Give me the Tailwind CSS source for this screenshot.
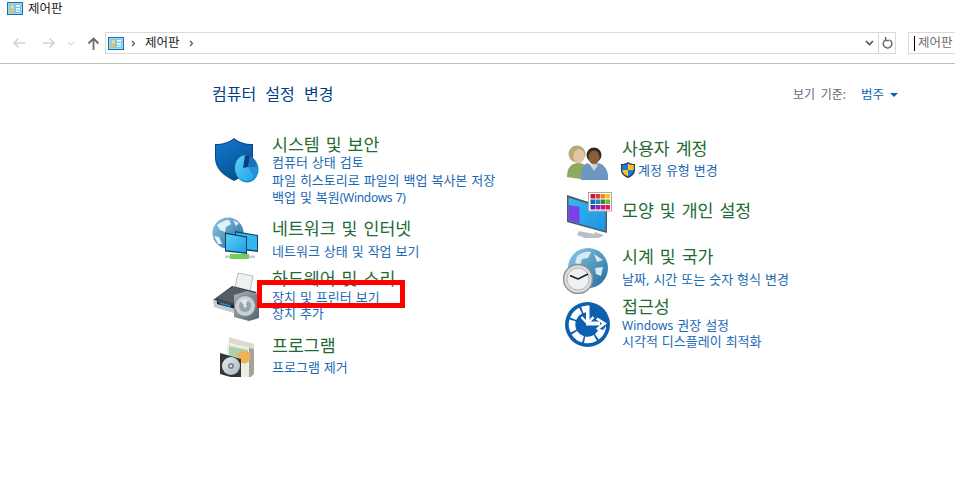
<!doctype html>
<html lang="ko">
<head>
<meta charset="utf-8">
<script src="https://cdn.jsdelivr.net/npm/@tailwindcss/browser@4"></script>
</head>
<body class="bg-white overflow-hidden font-['Noto_Sans','Noto_Sans_CJK_KR',sans-serif]">
<svg width="0" height="0" class="absolute">
  <defs>
    <symbol id="cp" viewBox="0 0 16 13">
      <rect x="0.5" y="0.5" width="15" height="12" fill="#9fd8f5" stroke="#1f6fa8"/>
      <rect x="2" y="2" width="12" height="9" fill="#7cc7ee"/>
      <circle cx="5.2" cy="5" r="2" fill="#f6d97e"/>
      <rect x="2" y="7.5" width="5" height="3" fill="#e8c35c"/>
      <rect x="9" y="3" width="4" height="1.6" fill="#fff"/>
      <rect x="9" y="6" width="4" height="1.6" fill="#fff"/>
      <rect x="9" y="8.6" width="4" height="1.4" fill="#dff3fc"/>
    </symbol>
    <linearGradient id="sh" x1="0" y1="0" x2="0.6" y2="1"><stop offset="0" stop-color="#1479d2"/><stop offset="1" stop-color="#07508f"/></linearGradient>
    <linearGradient id="gl" x1="0" y1="0" x2="1" y2="1"><stop offset="0" stop-color="#8ecbe8"/><stop offset="1" stop-color="#1f6a9c"/></linearGradient>
    <linearGradient id="sc" x1="0" y1="0" x2="1" y2="1"><stop offset="0" stop-color="#5dd0fa"/><stop offset="1" stop-color="#1f9fe4"/></linearGradient>
    <linearGradient id="wall" x1="0" y1="0" x2="1" y2="1"><stop offset="0" stop-color="#35b8f2"/><stop offset="1" stop-color="#1e93e2"/></linearGradient>
    <linearGradient id="box" x1="0" y1="0" x2="0" y2="1"><stop offset="0" stop-color="#dcd8cb"/><stop offset="1" stop-color="#a8a59c"/></linearGradient>
    <linearGradient id="metal" x1="0" y1="0" x2="1" y2="1"><stop offset="0" stop-color="#a9b4bb"/><stop offset="1" stop-color="#55626b"/></linearGradient>
    <linearGradient id="cd" x1="0" y1="0" x2="1" y2="1"><stop offset="0" stop-color="#e8edf0"/><stop offset="1" stop-color="#aeb8bd"/></linearGradient>
  </defs>
</svg>

<header class="h-[64px] border-b border-[#bfbfbf]">
  <div class="h-[16px] flex items-center pl-[7px] pt-[1px] gap-[5px]">
    <svg class="w-[16px] h-[13px]"><use href="#cp"/></svg>
    <span class="text-[12.500px] leading-[16px] text-[#1a1a1a]">제어판</span>
  </div>
  <div class="flex items-center h-[22px] mt-[16px]">
    <div class="w-[105px] h-full flex items-center pl-[12px] gap-[16px] shrink-0">
      <svg class="w-[14px] h-[12px]" viewBox="0 0 14 12" fill="none" stroke="#d3d3d3" stroke-width="1.6"><path d="M13 6H2M6.5 1.5 2 6l4.5 4.5"/></svg>
      <svg class="w-[14px] h-[12px]" viewBox="0 0 14 12" fill="none" stroke="#d3d3d3" stroke-width="1.6"><path d="M1 6h11M7.5 1.5 12 6l-4.5 4.5"/></svg>
      <svg class="w-[8px] h-[5px] -ml-[5px]" viewBox="0 0 8 5" fill="none" stroke="#d8d8d8" stroke-width="1.2"><path d="M1 1l3 3 3-3"/></svg>
      <svg class="w-[13px] h-[13px] -ml-[4px]" viewBox="0 0 13 13" fill="none" stroke="#6a6a6a" stroke-width="1.8"><path d="M6.5 13V2M1.500 6.500l5-5 5 5"/></svg>
    </div>
    <div class="w-[791px] h-full border border-[#d9d9d9] flex items-center shrink-0">
      <svg class="w-[16px] h-[13px] ml-[2px]"><use href="#cp"/></svg>
      <svg class="w-[5px] h-[7px] ml-[7px]" viewBox="0 0 5 7" fill="none" stroke="#555" stroke-width="1.2"><path d="M1 1l2.500 2.500L1 6"/></svg>
      <span class="text-[12.500px] leading-[16px] text-[#1a1a1a] ml-[9px]">제어판</span>
      <svg class="w-[5px] h-[7px] ml-[9px]" viewBox="0 0 5 7" fill="none" stroke="#555" stroke-width="1.2"><path d="M1 1l2.500 2.500L1 6"/></svg>
      <div class="ml-auto w-[17px] flex justify-center items-center h-full">
        <svg class="w-[9px] h-[6px]" viewBox="0 0 9 6" fill="none" stroke="#555" stroke-width="1.7"><path d="M1 1l3.500 3.500L8 1"/></svg>
      </div>
      <div class="w-[17px] h-full border-l border-[#d9d9d9] flex items-center justify-center">
        <svg class="w-[11px] h-[12px]" viewBox="0 0 11 12" fill="none" stroke="#6b6b6b" stroke-width="1.5"><path d="M4 2.600a4.300 4.300 0 1 0 3.600.2M3.600 0v3.400H7"/></svg>
      </div>
    </div>
    <div class="ml-[12px] flex-1 h-full border border-r-0 border-[#d9d9d9] flex items-center pl-[5px]">
      <span class="w-px h-[15px] bg-black"></span>
      <span class="text-[12.500px] leading-[16px] text-[#6d6d6d] ml-[3px] whitespace-nowrap">제어판</span>
    </div>
  </div>
</header>

<main class="relative pt-[20px]">
  <div class="flex items-center justify-between pl-[212px] pr-[57px] h-[20px]">
    <h1 class="text-[16px] leading-[20px] text-[#003f8a] [word-spacing:5px]">컴퓨터 설정 변경</h1>
    <div class="flex items-center pt-[2px]">
      <span class="text-[12px] leading-[16px] text-[#5b6b7a] [word-spacing:2.500px]">보기 기준:</span>
      <span class="text-[12.5px] leading-[16px] text-[#0a62b8] ml-[15px]">범주</span>
      <svg class="w-[8px] h-[4px] ml-[6px]" viewBox="0 0 8 4"><path d="M0 0h8L4 4z" fill="#0a62b8"/></svg>
    </div>
  </div>

  <div class="flex pl-[212px] mt-[32px]">
    <!-- left -->
    <div class="w-[353px] shrink-0">
      <section class="flex">
        <div class="w-[60px] h-0 shrink-0">
          <svg class="block mt-[2px] ml-[2px] w-[46px] h-[48px]" viewBox="0 0 46 48">
            <path d="M1 6C9 6 15 4 20 0c5 4 11 6 19 6v15c0 10-8 17-19 22C10 38 1 31 1 20z" fill="#0a4a84"/>
            <path d="M2 7C10 7 15 5 20 1.500 25 5 30 7 38 7v14c0 9-8 16-18 20.500C10 37 2 30 2 20z" fill="url(#sh)"/>
            <ellipse cx="33" cy="31.500" rx="11.500" ry="13" fill="#0f8fd0"/>
            <ellipse cx="32" cy="30" rx="11" ry="13" fill="url(#sc)"/>
            <path d="M34 29l2-11.500c4 2 6.500 6.500 7 11.500z" fill="#1672bb"/>
            <path d="M34 29l-5 1 2-12.700c2-.3 3.500-.2 5 .2z" fill="#0a3f78"/>
            <path d="M34 29h9c0 4-1 7-3 9.500z" fill="#2a8fd6"/>
          </svg>
        </div>
        <div class="min-w-0">
          <h2 class="text-[17.300px] leading-[18px] text-[#1f6b33] [word-spacing:1.500px]">시스템 및 보안</h2>
          <a class="block text-[13px] leading-[17.5px] text-[#1a69b5] [word-spacing:0.600px]">컴퓨터 상태 검토</a>
          <a class="block text-[13px] leading-[17.5px] text-[#1a69b5] [word-spacing:0.600px]">파일 히스토리로 파일의 백업 복사본 저장</a>
          <a class="block text-[13px] leading-[17.5px] text-[#1a69b5] [word-spacing:0.600px]">백업 및 복원<span class="text-[12px] tracking-[-0.3px]">(Windows 7)</span></a>
        </div>
      </section>
      <section class="flex mt-[13px]">
        <div class="w-[60px] h-0 shrink-0">
          <svg class="block -mt-[2.500px] w-[47px] h-[42px]" viewBox="0 0 47 42">
            <circle cx="16" cy="16" r="15.500" fill="url(#gl)"/>
            <path d="M5 8c4-3 8-5 12-5l2 4-5 3-1 5-5-2zM21 3l6 3-3 3zM2 19l5 1 3 7-4 0z" fill="#e3f0f5"/>
            <path d="M23 14l23 4v17l-23-3z" fill="#123f66"/>
            <path d="M24 15.500l21 3.500v14.500l-21-2.800z" fill="#35b6ef"/>
            <path d="M13 15.500l22 4v17.500l-22-2.500z" fill="#123f66"/>
            <path d="M14 17l20 3.500v15l-20-2.200z" fill="url(#sc)"/>
            <rect x="18" y="37" width="19" height="5" fill="#6fd05a"/>
            <rect x="13" y="38.500" width="5" height="2.500" fill="#c8ced1"/>
            <rect x="37" y="38.500" width="6" height="2.500" fill="#c8ced1"/>
          </svg>
        </div>
        <div>
          <h2 class="text-[17.300px] leading-[18px] text-[#1f6b33] [word-spacing:1.500px]">네트워크 및 인터넷</h2>
          <a class="block text-[13px] leading-[17.5px] mt-[5.5px] text-[#1a69b5] [word-spacing:0.600px]">네트워크 상태 및 작업 보기</a>
        </div>
      </section>
      <section class="flex mt-[9px]">
        <div class="w-[60px] h-0 shrink-0">
          <svg class="block mt-[2.500px] ml-[1px] w-[46px] h-[49px]" viewBox="0 0 46 49">
            <path d="M25 1l15 3-3 15-15-4z" fill="#eef1f2" stroke="#a9b0b4" stroke-width=".8"/>
            <path d="M0 28l19-14 25 6-20 14z" fill="#3f464b"/>
            <path d="M3 26l17-11 18 5-18 11z" fill="#565e63"/>
            <path d="M0 28l24 7v7L1 35z" fill="#c5cace"/>
            <path d="M4 29l17 4v3.500L4 32z" fill="#1b2126"/>
            <path d="M6 30l12 3-1 2-10-3z" fill="#1e88d4"/>
            <path d="M21 23l13-4 12 3v24l-10 3-15-4z" fill="url(#metal)"/>
            <circle cx="32" cy="34" r="10.500" fill="#c9d0d4" stroke="#7b878e"/>
            <circle cx="32" cy="34" r="6" fill="#98a4ab"/>
            <path d="M27 29a7 7 0 0 1 8-1l-3 6z" fill="#e1e6e9"/>
            <circle cx="32" cy="34" r="1.500" fill="#eef1f3"/>
          </svg>
        </div>
        <div>
          <h2 class="text-[17.300px] leading-[18px] text-[#1f6b33] [word-spacing:1.500px]">하드웨어 및 소리</h2>
          <a class="block text-[13px] leading-[17.5px] mt-[1px] text-[#1a69b5] [word-spacing:0.600px]">장치 및 프린터 보기</a>
          <a class="block text-[13px] leading-[17px] -mt-[1.5px] text-[#1a69b5] [word-spacing:0.600px]">장치 추가</a>
        </div>
      </section>
      <section class="flex mt-[15px]">
        <div class="w-[60px] h-0 shrink-0">
          <svg class="block mt-[0.500px] ml-[8px] w-[36px] h-[43px]" viewBox="0 0 36 43">
            <path d="M9 0l25 7v5L9 6z" fill="#dcd9cd"/>
            <path d="M29 11l5 1v25l-5 5z" fill="#a5a297"/>
            <path d="M7 6l22 5v31L7 37z" fill="#eceee5"/>
            <path d="M9 9l19 4v9L9 19z" fill="#aed1a8"/>
            <circle cx="24" cy="20" r="6.500" fill="#f0b254"/>
            <path d="M0 16l21 6v21L0 37z" fill="#2f363c"/>
            <circle cx="11" cy="29" r="9" fill="url(#cd)"/>
            <circle cx="11" cy="29" r="3" fill="#7a858b"/>
            <circle cx="11" cy="29" r="1.200" fill="#dfe5e8"/>
          </svg>
        </div>
        <div>
          <h2 class="text-[17.300px] leading-[18px] text-[#1f6b33]">프로그램</h2>
          <a class="block text-[13px] leading-[17.5px] mt-[4.5px] text-[#1a69b5] [word-spacing:0.600px]">프로그램 제거</a>
        </div>
      </section>
    </div>

    <!-- right -->
    <div class="w-[330px] shrink-0 pt-[4px]">
      <section class="flex">
        <div class="w-[57px] h-0 shrink-0">
          <svg class="block mt-[5px] ml-[2px] w-[42px] h-[36px]" viewBox="0 0 42 36">
            <circle cx="10" cy="9" r="8.500" fill="#b9ab77"/>
            <ellipse cx="12" cy="11" rx="5.500" ry="7" fill="#e3c5a5"/>
            <path d="M0 32c0-9 4-14 11-14s13 5 13 14l-11 2z" fill="#8cab5e"/>
            <path d="M14 35c-1-9 2-15 6-17l6 3 6-3c6 2 10 8 9 17z" fill="#6d97c0"/>
            <circle cx="27" cy="10" r="7.500" fill="#2e2a26"/>
            <ellipse cx="27" cy="12.500" rx="5.500" ry="7" fill="#8a5d3c"/>
            <path d="M23 20l4 6 4-6z" fill="#c5d8ea"/>
          </svg>
        </div>
        <div>
          <h2 class="text-[17.300px] leading-[18px] text-[#1f6b33] [word-spacing:1.500px]">사용자 계정</h2>
          <div class="flex items-center mt-[3.5px] h-[17.5px]">
            <svg class="w-[14px] h-[16px] -ml-px shrink-0" viewBox="0 0 14 16">
              <path d="M7 0c2 1.500 4 2 7 2v6c0 4-3 6.500-7 8-4-1.500-7-4-7-8V2c3 0 5-.5 7-2z" fill="#1f3f63"/>
              <path d="M7 1.500V8H1.200V3c2.500 0 4-.5 5.800-1.500z" fill="#1a7dd0"/>
              <path d="M7 1.500c1.800 1 3.300 1.500 5.800 1.500v5H7z" fill="#f6c02e"/>
              <path d="M1.200 8H7v6.500C3.500 13 1.200 11 1.200 8z" fill="#f6c02e"/>
              <path d="M7 8h5.800c0 3-2.300 5-5.800 6.500z" fill="#1a7dd0"/>
            </svg>
            <a class="block text-[13px] leading-[17.5px] ml-[3px] text-[#1a69b5] [word-spacing:0.600px]">계정 유형 변경</a>
          </div>
        </div>
      </section>
      <section class="flex mt-[22.5px]">
        <div class="w-[57px] h-0 shrink-0">
          <svg class="block -mt-[9.500px] ml-[2px] w-[45px] h-[46px]" viewBox="0 0 45 46">
            <path d="M0 3l40 13v25L0 30z" fill="#4f5c66"/>
            <path d="M1.500 5.500l37 12v21.500L1.500 28.500z" fill="url(#wall)"/>
            <path d="M1.500 13l11 2v16l-11-2.500z" fill="#7c3fe8"/>
            <path d="M12 39l15 3 1-2 8 3v1l-5 2H18l-8-3z" fill="#b8c0c6"/>
            <rect x="21.500" y="0.500" width="23" height="18.500" fill="#fff" stroke="#aaa"/>
            <g>
              <rect x="23.500" y="2" width="4.500" height="4.500" fill="#d8122a"/><rect x="28.500" y="2" width="4.500" height="4.500" fill="#e23b3b"/><rect x="33.500" y="2" width="4.500" height="4.500" fill="#ef8a1a"/><rect x="38.500" y="2" width="4.500" height="4.500" fill="#f5c518"/>
              <rect x="23.500" y="7.500" width="4.500" height="4.500" fill="#0a6cc2"/><rect x="28.500" y="7.500" width="4.500" height="4.500" fill="#1292c4"/><rect x="33.500" y="7.500" width="4.500" height="4.500" fill="#2e8a3a"/><rect x="38.500" y="7.500" width="4.500" height="4.500" fill="#7ab32a"/>
              <rect x="23.500" y="13" width="4.500" height="4.500" fill="#5a26b0"/><rect x="28.500" y="13" width="4.500" height="4.500" fill="#8a2bb5"/><rect x="33.500" y="13" width="4.500" height="4.500" fill="#d01080"/><rect x="38.500" y="13" width="4.500" height="4.500" fill="#e01458"/>
            </g>
          </svg>
        </div>
        <div>
          <h2 class="text-[17.300px] leading-[18px] text-[#1f6b33] [word-spacing:1.500px]">모양 및 개인 설정</h2>
        </div>
      </section>
      <section class="flex mt-[28px]">
        <div class="w-[57px] h-0 shrink-0">
          <svg class="block mt-[0.500px] -ml-[2px] w-[46px] h-[46px]" viewBox="0 0 46 46">
            <circle cx="25" cy="20" r="20" fill="url(#gl)"/>
            <path d="M14 8c5-4 10-5 14-4l-3 6-6 1-2 6-5-2zM31 6l9 6-6 2zM32 20l8-1-2 9-5-2z" fill="#d5eaf2"/>
            <circle cx="15" cy="31" r="14.500" fill="#dadcde" stroke="#8d9296" stroke-width="1.500"/>
            <circle cx="15" cy="31" r="11" fill="#eef0f1" stroke="#b5b9bc"/>
            <path d="M15 31L7 27.500M15 31l10-5" stroke="#222" stroke-width="1.400" fill="none"/>
          </svg>
        </div>
        <div>
          <h2 class="text-[17.300px] leading-[18px] text-[#1f6b33] [word-spacing:1.500px]">시계 및 국가</h2>
          <a class="block text-[13px] leading-[17.5px] mt-[5px] text-[#1a69b5] [word-spacing:0.600px]">날짜, 시간 또는 숫자 형식 변경</a>
        </div>
      </section>
      <section class="flex mt-[10px]">
        <div class="w-[57px] h-0 shrink-0">
          <svg class="block mt-[3.500px] w-[45px] h-[45px]" viewBox="0 0 45 45">
            <circle cx="22.500" cy="22.500" r="22.500" fill="#0d5fb0"/>
            <circle cx="22.500" cy="22.500" r="15.500" fill="none" stroke="#fff" stroke-width="6.500" stroke-dasharray="11 1.800" transform="rotate(12 22.500 22.500)"/>
            <path d="M22.500 22.500L22.500 3A19.500 19.500 0 0 1 42 22.500L38 28z" fill="#0d5fb0"/>
            <path d="M21 3.500H24.500V19.500H35V23.500H21z" fill="#fff"/>
            <path d="M16.500 15l6 6.500 6-6.500" fill="none" stroke="#fff" stroke-width="2.500"/>
            <path d="M32.500 15.500L42 21.500 32.500 28.500 31 26.500 37 21.500 31 17.500z" fill="#fff"/>
          </svg>
        </div>
        <div>
          <h2 class="text-[17.300px] leading-[18px] text-[#1f6b33]">접근성</h2>
          <a class="block text-[13px] leading-[17.5px] mt-[1px] text-[#1a69b5] [word-spacing:0.600px]"><span class="text-[12px]">Windows</span> 권장 설정</a>
          <a class="block text-[13px] leading-[17px] -mt-[1.5px] text-[#1a69b5] [word-spacing:0.600px]">시각적 디스플레이 최적화</a>
        </div>
      </section>
    </div>
  </div>

  <div class="absolute left-[257px] top-[216px] w-[148px] h-[28px] border-[5.500px] border-[#ff0000]"></div>
</main>
</body>
</html>
